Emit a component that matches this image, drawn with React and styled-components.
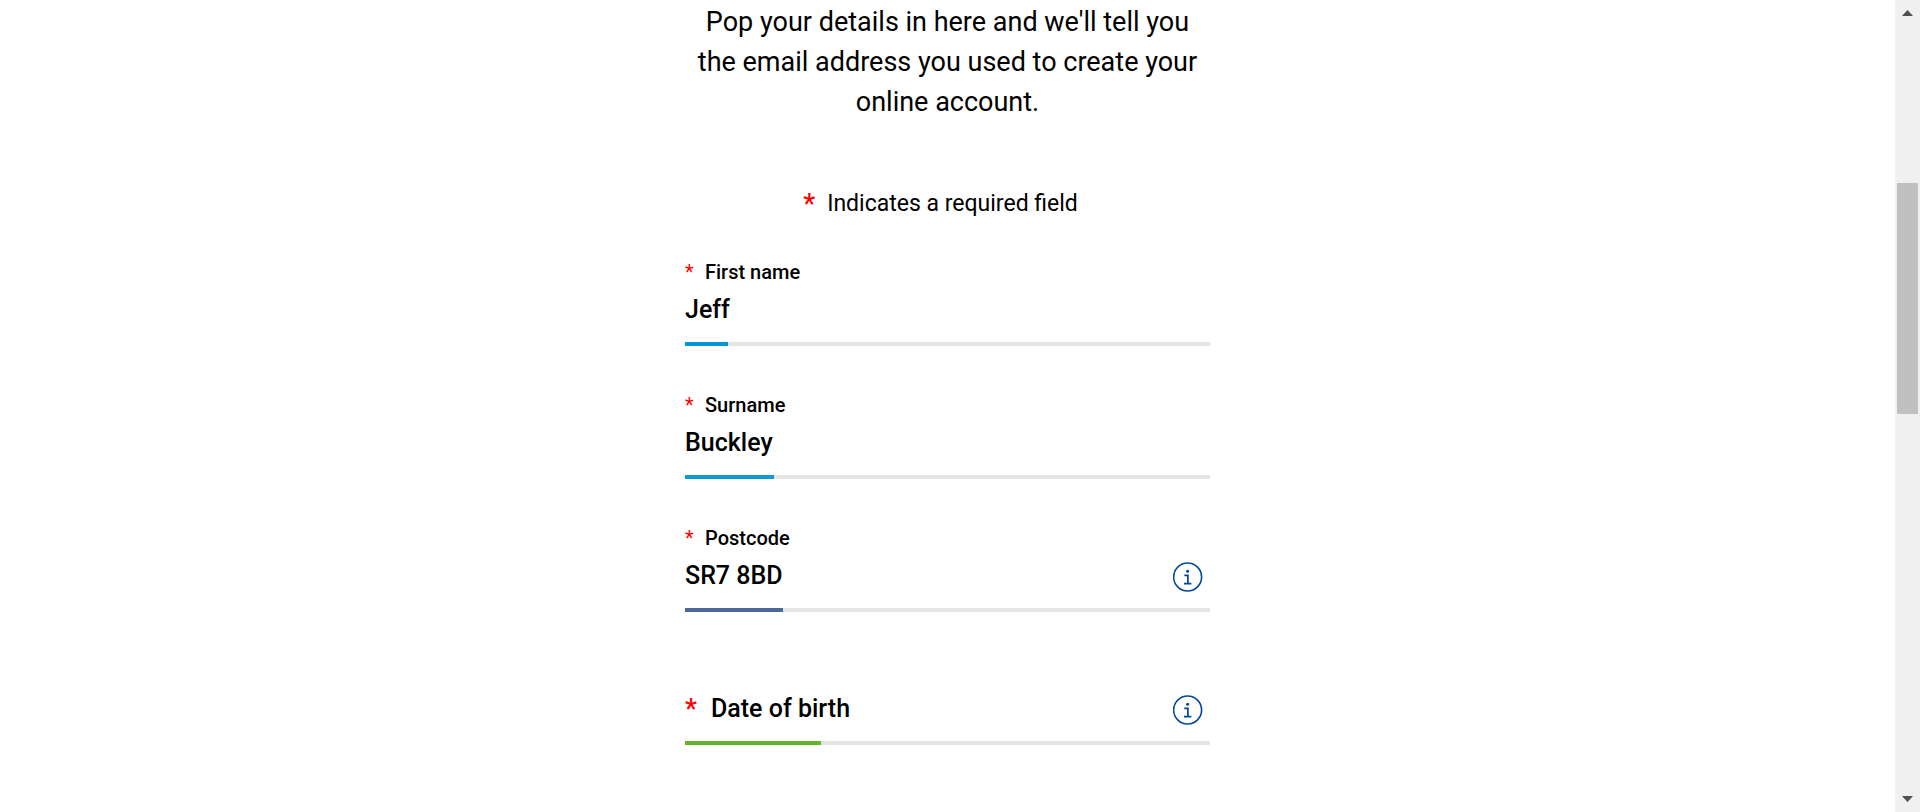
import React, { useState } from 'react';
import styled, { createGlobalStyle } from 'styled-components';

const GlobalStyle = createGlobalStyle`
  *, *::before, *::after { box-sizing: border-box; }
  body {
    margin: 0;
    background: #fff;
    color: #000;
    font-family: Roboto, "Noto Sans", sans-serif;
  }
`;

const Page = styled.div`
  display: flex;
  min-height: 100vh;
`;

const Main = styled.main`
  flex: 1;
  min-width: 0;
  display: flex;
  justify-content: center;
`;

const Form = styled.form`
  width: 100%;
  max-width: 525px;
  display: flex;
  flex-direction: column;
`;

const Intro = styled.p`
  margin: 0;
  padding: 2px 10px 0;
  font-size: 27px;
  font-weight: 400;
  line-height: 40px;
  text-align: center;
`;

const RequiredNote = styled.p`
  display: flex;
  justify-content: center;
  gap: 10px;
  margin: 66px 0 38px;
  padding-right: 14px;
  font-size: 23px;
  font-weight: 400;
  line-height: 32px;
`;

const Star = styled.span`
  width: ${({ $large }) => ($large ? '14px' : '10px')};
  color: #f00;
  font-size: ${({ $large }) => ($large ? '27px' : '20px')};
  font-weight: ${({ $large }) => ($large ? 500 : 400)};
`;

const Fields = styled.div`
  display: flex;
  flex-direction: column;
  gap: 45px;
`;

const Field = styled.div`
  display: flex;
  flex-direction: column;
`;

const Label = styled.label`
  display: flex;
  flex: none;
  gap: ${({ $large }) => ($large ? '12px' : '10px')};
  font-size: ${({ $large }) => ($large ? '25px' : '20px')};
  font-weight: 500;
  line-height: ${({ $large }) => ($large ? '40px' : '28px')};
`;

const Control = styled.div`
  display: flex;
  align-items: center;
  height: 56px;
  padding: 0 7px 8px 0;
`;

const TextInput = styled.input`
  flex: 1;
  min-width: 0;
  height: 40px;
  padding: 0;
  border: 0;
  outline: 0;
  background: transparent;
  color: inherit;
  font: 500 25px/40px Roboto, "Noto Sans", sans-serif;
`;

const Spacer = styled.div`
  height: 28px;
`;

const InfoButton = styled.button`
  display: flex;
  width: 30px;
  height: 30px;
  padding: 0;
  margin-top: 2px;
  border: 0;
  background: none;
  color: #00479b;
`;

const Track = styled.div`
  height: 4px;
  background: #e5e5e5;
`;

const Fill = styled.div`
  width: ${({ $width }) => $width}px;
  height: 100%;
  background: ${({ $color }) => $color};
`;

const Scrollbar = styled.div`
  position: sticky;
  top: 0;
  flex: none;
  width: 25px;
  height: 100vh;
  padding: 10px 2px;
  display: flex;
  flex-direction: column;
  align-items: center;
  background: #f0f0f0;
`;

const Groove = styled.div`
  flex: 1;
  width: 100%;
  display: flex;
  flex-direction: column;
  margin: 4px 0;
`;

const Before = styled.div`
  flex: 163;
`;

const Thumb = styled.div`
  flex: 231;
  background: #c0c0c0;
`;

const After = styled.div`
  flex: 378;
`;

const Arrow = styled.svg`
  display: block;
  width: 11px;
  height: 6px;
  flex: none;
  fill: #505050;
`;

function InfoIcon() {
  return (
    <svg width="30" height="30" viewBox="0 0 30 30" fill="none" stroke="currentColor" aria-hidden="true">
      <circle cx="14.6" cy="15" r="14" strokeWidth="1.6" />
      <circle cx="14.6" cy="9.3" r="1.5" fill="currentColor" stroke="none" />
      <path d="M11.3 13.3h3.6v8.2M11 21.6h7.4" strokeWidth="1.7" />
    </svg>
  );
}

function TextField({ id, label, initial, fill, color, info, inlineLabel }) {
  const [value, setValue] = useState(initial);
  const labelNode = (
    <Label htmlFor={id} $large={inlineLabel}>
      <Star $large={inlineLabel} aria-hidden="true">*</Star>
      {label}
    </Label>
  );
  return (
    <Field>
      {inlineLabel ? <Spacer /> : labelNode}
      <Control>
        {inlineLabel && labelNode}
        <TextInput
          id={id}
          type="text"
          required
          value={value}
          onChange={(event) => setValue(event.target.value)}
        />
        {info && (
          <InfoButton type="button" aria-label={`More about ${label}`}>
            <InfoIcon />
          </InfoButton>
        )}
      </Control>
      <Track>
        <Fill $width={fill} $color={color} />
      </Track>
    </Field>
  );
}

export default function App() {
  return (
    <Page>
      <GlobalStyle />
      <Main>
        <Form>
          <Intro>
            Pop your details in here and we'll tell you the email address you used to create your online account.
          </Intro>
          <RequiredNote>
            <Star $large aria-hidden="true">*</Star>
            Indicates a required field
          </RequiredNote>
          <Fields>
            <TextField id="first-name" label="First name" initial="Jeff" fill={43} color="#0095db" />
            <TextField id="surname" label="Surname" initial="Buckley" fill={89} color="#0f9bd2" />
            <TextField id="postcode" label="Postcode" initial="SR7 8BD" fill={98} color="#4f689b" info />
            <TextField id="dob" label="Date of birth" initial="" fill={136} color="#64b22e" info inlineLabel />
          </Fields>
        </Form>
      </Main>
      <Scrollbar aria-hidden="true">
        <Arrow viewBox="0 0 11 6"><path d="M5.5 0L11 6H0z" /></Arrow>
        <Groove>
          <Before />
          <Thumb />
          <After />
        </Groove>
        <Arrow viewBox="0 0 11 6"><path d="M0 0h11L5.5 6z" /></Arrow>
      </Scrollbar>
    </Page>
  );
}
